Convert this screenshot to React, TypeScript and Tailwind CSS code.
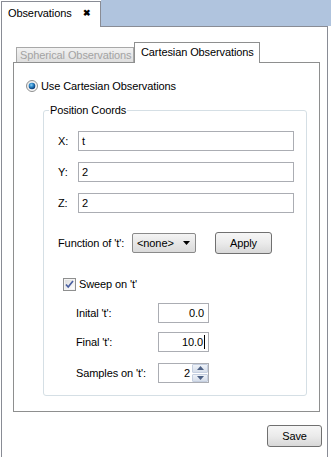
import React from "react";

const fieldCls =
  "h-[20px] border border-[#abadb3] bg-white flex items-center text-[11px] text-black";

function Radio() {
  return (
    <svg width="12" height="12" viewBox="0 0 12 12">
      <defs>
        <radialGradient id="rg" cx="0.4" cy="0.35" r="0.6">
          <stop offset="0" stopColor="#8fd0f5" />
          <stop offset="0.5" stopColor="#2a86c8" />
          <stop offset="1" stopColor="#0d3f7a" />
        </radialGradient>
        <linearGradient id="rbg" x1="0" y1="0" x2="1" y2="1">
          <stop offset="0" stopColor="#e8e8e8" />
          <stop offset="1" stopColor="#ffffff" />
        </linearGradient>
      </defs>
      <circle cx="6" cy="6" r="5.5" fill="url(#rbg)" stroke="#8e8f8f" />
      <circle cx="6" cy="6" r="3.3" fill="url(#rg)" />
    </svg>
  );
}

function Check() {
  return (
    <svg width="13" height="13" viewBox="0 0 13 13">
      <defs>
        <linearGradient id="cbg" x1="0" y1="0" x2="1" y2="1">
          <stop offset="0" stopColor="#dcdcdc" />
          <stop offset="1" stopColor="#ffffff" />
        </linearGradient>
      </defs>
      <rect x="0.5" y="0.5" width="12" height="12" fill="#f4f4f4" stroke="#8e8f8f" />
      <rect x="2" y="2" width="9" height="9" fill="url(#cbg)" />
      <path d="M3 6.5 L5.2 9 L10 3" fill="none" stroke="#4a5fa0" strokeWidth="1.7" />
    </svg>
  );
}

export default function App() {
  return (
    <div className="w-[331px] h-[457px] bg-white flex flex-col overflow-hidden font-['Liberation_Sans',Arial,sans-serif] text-[11px] text-black leading-[13px] tracking-[-0.1px]">
      {/* header */}
      <div className="flex h-[27px] shrink-0">
        <div className="ml-[1px] mt-[1px] w-[100px] border-l border-t border-r border-[#898c95] bg-white flex items-center pl-[6px] pb-[2px]">
          <span>Observations</span>
          <span className="ml-[11px] text-[9px] font-bold">✖</span>
        </div>
        <div className="flex-1 flex flex-col">
          <div className="flex-1 bg-[#b0c4de]" />
          <div className="h-px bg-[#898c95] mr-[3px]" />
        </div>
      </div>
      {/* body */}
      <div className="flex-1 ml-[1px] w-[327px] border-l border-r border-[#898c95] pt-[15px] pl-[11px] flex flex-col">
        <div className="flex items-end pl-[3px] h-[20px]">
          <div className="w-[118px] h-[15px] border-l border-t border-r border-[#a8a8a8] bg-gradient-to-b from-[#f2f2f2] to-[#dedede] text-[#a3a3a3] flex items-center pl-[3px] whitespace-nowrap overflow-hidden">
            Spherical Observations
          </div>
          <div className="relative z-10 -mb-px w-[126px] h-[21px] border-l border-t border-r border-[#8e8f8f] bg-white flex items-center pl-[6px] pb-[1px] whitespace-nowrap">
            Cartesian Observations
          </div>
        </div>
        <div className="w-[307px] h-[350px] border border-[#8e8f8f] flex flex-col">
          <div className="flex items-center mt-[17px] ml-[12px] h-[12px]">
            <Radio />
            <span className="ml-[3px]">Use Cartesian Observations</span>
          </div>
          <fieldset className="mt-[12px] ml-[29px] w-[264px] h-[292px] border border-[#d5dfe5] rounded-[3px] pl-[14px] pr-[12px]">
            <legend className="ml-[-9px] px-[1px] leading-[12px] text-black">Position Coords</legend>
            <div className="flex items-center mt-[15px]">
              <span className="w-[20px]">X:</span>
              <div className={fieldCls + " flex-1 pl-[3px]"}>t</div>
            </div>
            <div className="flex items-center mt-[11px]">
              <span className="w-[20px]">Y:</span>
              <div className={fieldCls + " flex-1 pl-[3px]"}>2</div>
            </div>
            <div className="flex items-center mt-[11px]">
              <span className="w-[20px]">Z:</span>
              <div className={fieldCls + " flex-1 pl-[3px]"}>2</div>
            </div>
            <div className="flex items-center mt-[19px]">
              <span className="w-[74px]">Function of 't':</span>
              <div className="w-[64px] h-[20px] border border-[#8a8a8a] rounded-[2px] bg-gradient-to-b from-[#f4f4f4] to-[#dadada] flex items-center pl-[4px] pr-[5px] justify-between">
                <span>&lt;none&gt;</span>
                <svg width="7" height="4" viewBox="0 0 7 4"><path d="M0 0H7L3.5 4Z" fill="#000" /></svg>
              </div>
              <div className="ml-[19px] w-[57px] h-[22px] rounded-[3px] border border-[#707070] bg-gradient-to-b from-[#f6f6f6] via-[#ebebeb] to-[#d8d8d8] flex items-center justify-center">
                Apply
              </div>
            </div>
            <div className="flex items-center mt-[24px] ml-[5px] h-[13px]">
              <Check />
              <span className="ml-[3px]">Sweep on 't'</span>
            </div>
            <div className="flex items-center mt-[12px] ml-[18px]">
              <span className="w-[82px]">Inital 't':</span>
              <div className={fieldCls + " w-[51px] justify-end pr-[4px]"}>0.0</div>
            </div>
            <div className="flex items-center mt-[9px] ml-[18px]">
              <span className="w-[82px]">Final 't':</span>
              <div className={fieldCls + " w-[51px] justify-end pr-[3px]"}>
                10.0<span className="inline-block w-px h-[14px] bg-black ml-px" />
              </div>
            </div>
            <div className="flex items-center mt-[11px] ml-[18px]">
              <span className="w-[82px]">Samples on 't':</span>
              <div className={fieldCls + " w-[51px] justify-end pl-[3px]"}>
                <span className="mr-[2px]">2</span>
                <div className="flex flex-col w-[16px] h-[18px] gap-px">
                  <div className="flex-1 rounded-[1px] border border-[#c5cfe0] bg-gradient-to-b from-[#eef2f8] to-[#d6deea] flex items-center justify-center">
                    <svg width="7" height="4" viewBox="0 0 7 4"><path d="M0 4H7L3.5 0Z" fill="#4d6185" /></svg>
                  </div>
                  <div className="flex-1 rounded-[1px] border border-[#c5cfe0] bg-gradient-to-b from-[#eef2f8] to-[#d6deea] flex items-center justify-center">
                    <svg width="7" height="4" viewBox="0 0 7 4"><path d="M0 0H7L3.5 4Z" fill="#4d6185" /></svg>
                  </div>
                </div>
              </div>
            </div>
          </fieldset>
        </div>
        <div className="flex justify-end mt-[13px] mr-[5px]">
          <div className="w-[55px] h-[22px] rounded-[3px] border border-[#707070] bg-gradient-to-b from-[#f6f6f6] via-[#ebebeb] to-[#d8d8d8] flex items-center justify-center">
            Save
          </div>
        </div>
      </div>
    </div>
  );
}
